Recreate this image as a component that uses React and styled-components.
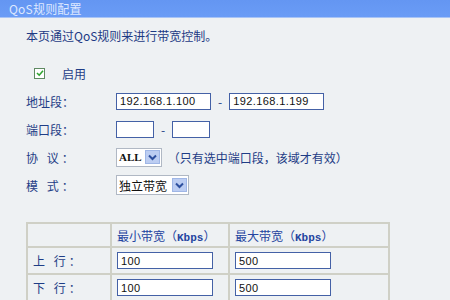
import React from 'react'
import styled, {createGlobalStyle} from 'styled-components'

const GlobalStyle = createGlobalStyle`
  html, body {
    margin: 0;
    padding: 0;
    background: #eef1f3;
  }
  body {
    font-family: "Noto Sans CJK SC", "Liberation Sans", sans-serif;
    font-size: 12px;
    color: #1f3d86;
  }
`

const Page = styled.div`
  width: 450px;
  height: 300px;
  overflow: hidden;
  display: flex;
  flex-direction: column;
`

const TitleBar = styled.div`
  height: 21px;
  background: linear-gradient(#6496f2, #6a9cf6);
  border-bottom: 1px solid #a8c4f6;
  display: flex;
  align-items: center;
  padding-left: 9px;
  color: #dde8ff;
  font-size: 12px;
  letter-spacing: 0.2px;
`

const Content = styled.div`
  padding: 9px 0 0 26px;
  display: flex;
  flex-direction: column;
`

const Intro = styled.div`
  height: 18px;
  line-height: 18px;
  color: #1d3a84;
`

const Form = styled.div`
  display: grid;
  grid-template-columns: 90px auto;
  grid-auto-rows: 28px;
  align-items: center;
  margin-top: 14px;
`

const Label = styled.div`
  color: #1f3d86;
  letter-spacing: ${p => (p.$spaced ? '3px' : '0')};
`

const Field = styled.div`
  display: flex;
  align-items: center;
  gap: 7px;
  color: #1f3d86;
`

const CheckRow = styled.div`
  grid-column: 1 / span 2;
  display: flex;
  align-items: center;
  padding-left: 8px;
  gap: 17px;
`

const Check = styled.span`
  width: 9px;
  height: 9px;
  border: 1px solid #5f8a62;
  background: #fff;
  display: inline-flex;
  align-items: center;
  justify-content: center;
`

const TextBox = styled.div`
  box-sizing: border-box;
  width: ${p => p.$w}px;
  height: 17px;
  background: #fff;
  border: 1px solid #4461a6;
  padding-left: 3px;
  display: flex;
  align-items: center;
  font-family: "Liberation Sans", sans-serif;
  font-size: 11px;
  letter-spacing: 0.4px;
  color: #111;
`

const Select = styled.div`
  box-sizing: border-box;
  height: ${p => p.$h}px;
  background: #fff;
  border: 1px solid #b0b8c4;
  display: flex;
  align-items: center;
  padding-left: 2px;
  gap: ${p => p.$gap}px;
  color: #111;
  font-size: 12px;
`

const SelectText = styled.span`
  font-family: ${p => (p.$serif ? '"Liberation Serif", serif' : '"Noto Sans CJK SC", sans-serif')};
  font-weight: ${p => (p.$serif ? 700 : 400)};
  font-size: ${p => (p.$serif ? '11px' : '12px')};
`

const Arrow = styled.span`
  width: 13px;
  height: 12px;
  background: #bccdf2;
  border: 1px solid #9fb6e6;
  display: inline-flex;
  align-items: center;
  justify-content: center;
  margin-right: 1px;
`

const Hint = styled.span`
  color: #1f3d86;
  margin-left: -1px;
`

const Table = styled.div`
  margin-top: 23px;
  width: 362px;
  display: grid;
  grid-template-columns: 84px 118px 160px;
  border-top: 2px solid #cfd0c6;
  border-left: 2px solid #cfd0c6;
`

const Cell = styled.div`
  box-sizing: border-box;
  height: ${p => p.$h}px;
  border-right: 2px solid #cfd0c6;
  border-bottom: 2px solid #cfd0c6;
  display: flex;
  align-items: center;
  padding-left: 5px;
  color: #1f3d86;
  letter-spacing: ${p => (p.$spaced ? '3px' : '0')};
`

const Head = styled.span`
  color: #2444a0;
`

const Kbps = styled.span`
  font-family: "Liberation Mono", monospace;
  font-weight: 700;
  font-size: 11px;
`

const Chevron = () => (
  <svg width="9" height="7" viewBox="0 0 9 7">
    <path d="M1 1.5 L4.5 5 L8 1.5" fill="none" stroke="#2d4f9e" strokeWidth="2" />
  </svg>
)

const Tick = () => (
  <svg width="8" height="8" viewBox="0 0 8 8">
    <path d="M1 4 L3.2 6.2 L7 1.8" fill="none" stroke="#2fa52f" strokeWidth="1.6" />
  </svg>
)

export default function App() {
  return (
    <Page>
      <GlobalStyle />
      <TitleBar>QoS规则配置</TitleBar>
      <Content>
        <Intro>本页通过QoS规则来进行带宽控制。</Intro>
        <Form>
          <CheckRow>
            <Check><Tick /></Check>
            <span>启用</span>
          </CheckRow>

          <Label>地址段：</Label>
          <Field>
            <TextBox $w={95}>192.168.1.100</TextBox>
            <span>-</span>
            <TextBox $w={95}>192.168.1.199</TextBox>
          </Field>

          <Label>端口段：</Label>
          <Field>
            <TextBox $w={38} />
            <span>-</span>
            <TextBox $w={38} />
          </Field>

          <Label $spaced>协 议：</Label>
          <Field>
            <Select $h={19} $gap={3}>
              <SelectText $serif>ALL</SelectText>
              <Arrow><Chevron /></Arrow>
            </Select>
            <Hint>（只有选中端口段，该域才有效）</Hint>
          </Field>

          <Label $spaced>模 式：</Label>
          <Field>
            <Select $h={20} $gap={5}>
              <SelectText>独立带宽</SelectText>
              <Arrow><Chevron /></Arrow>
            </Select>
          </Field>
        </Form>

        <Table>
          <Cell $h={24} />
          <Cell $h={24}><Head>最小带宽（<Kbps>Kbps</Kbps>）</Head></Cell>
          <Cell $h={24}><Head>最大带宽（<Kbps>Kbps</Kbps>）</Head></Cell>

          <Cell $h={27} $spaced>上 行：</Cell>
          <Cell $h={27}><TextBox $w={96}>100</TextBox></Cell>
          <Cell $h={27}><TextBox $w={96}>500</TextBox></Cell>

          <Cell $h={27} $spaced>下 行：</Cell>
          <Cell $h={27}><TextBox $w={96}>100</TextBox></Cell>
          <Cell $h={27}><TextBox $w={96}>500</TextBox></Cell>
        </Table>
      </Content>
    </Page>
  )
}
